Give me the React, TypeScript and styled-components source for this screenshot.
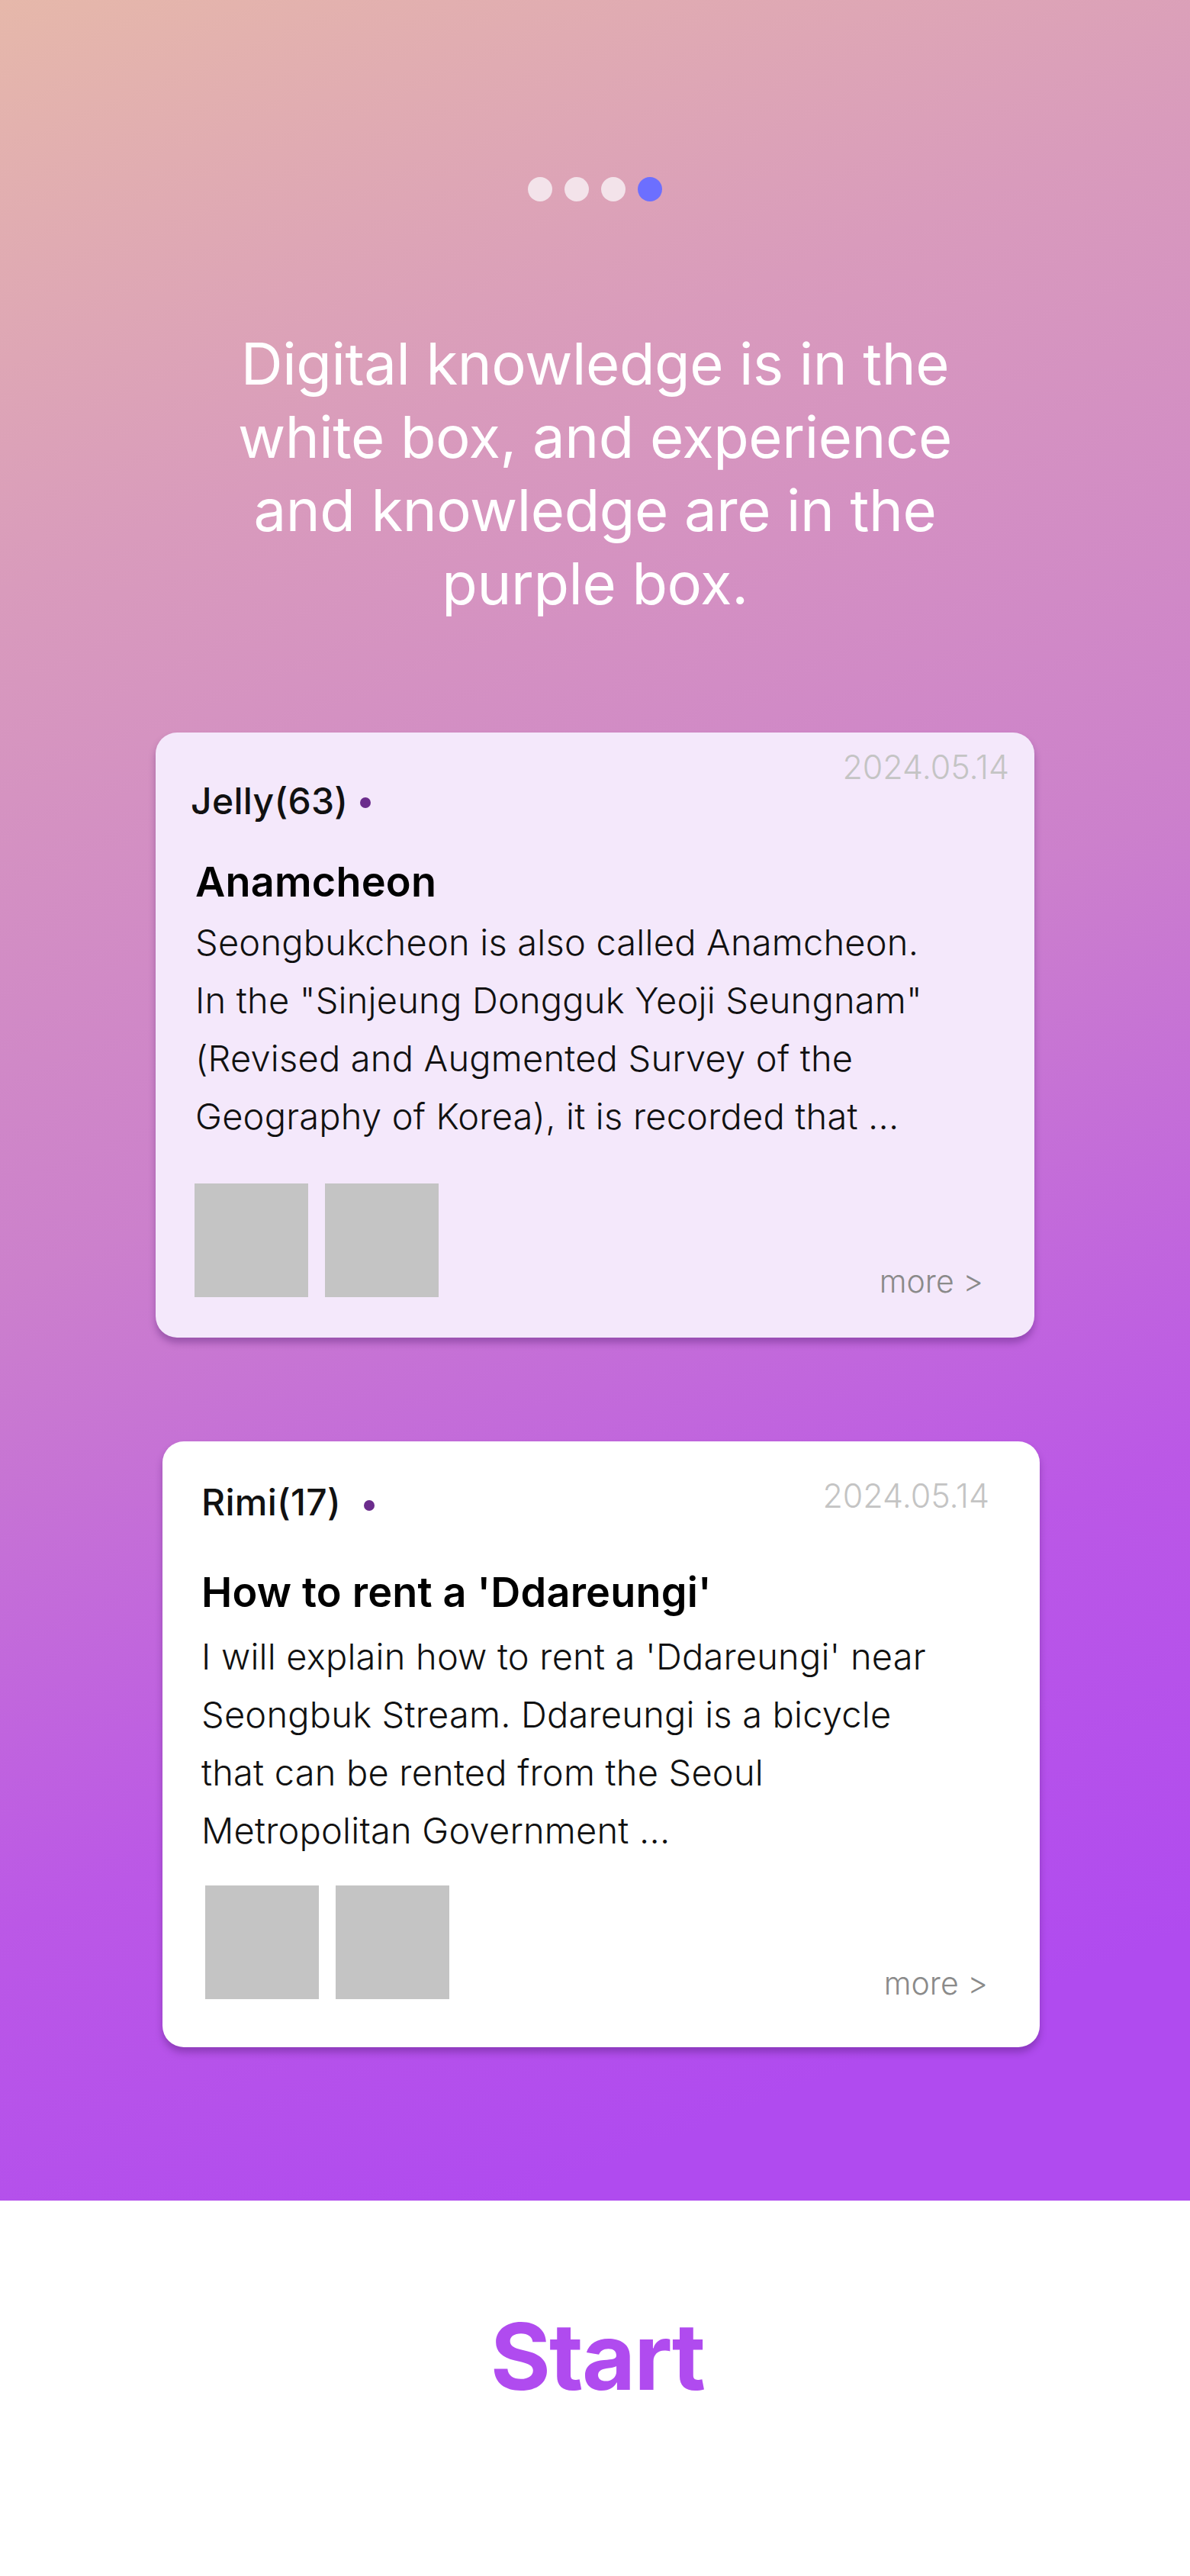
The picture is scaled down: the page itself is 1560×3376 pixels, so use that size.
import React from "react";
import styled, { createGlobalStyle } from "styled-components";

const Global = createGlobalStyle`
  html, body { margin: 0; padding: 0; background: #ffffff; }
  body { font-family: Inter, "Noto Sans", "Liberation Sans", sans-serif; }
  * { box-sizing: border-box; }
`;

const Page = styled.div`
  width: 1560px;
  display: flex;
  flex-direction: column;
`;

const Hero = styled.section`
  height: 2884px;
  padding: 232px 0 0 204px;
  display: flex;
  flex-direction: column;
  align-items: flex-start;
  background: linear-gradient(158deg, #e6b8aa 0%, #d99bbc 22%, #cc80cc 48%, #bb58e6 72%, #b04bef 90%);
`;

const Dots = styled.div`
  width: 1152px;
  display: flex;
  justify-content: center;
  gap: 16px;
`;

const Dot = styled.span<{ $active?: boolean }>`
  width: 32px;
  height: 32px;
  border-radius: 50%;
  background: ${(p) => (p.$active ? "#6c6fff" : "#f3e3ea")};
`;

const Heading = styled.h1`
  width: 1152px;
  margin: 164px 0 0 0;
  text-align: center;
  color: #ffffff;
  font-size: 76px;
  line-height: 96px;
  font-weight: 400;
  letter-spacing: -0.4px;
`;

const Card = styled.article<{ $bg: string; $mt: number; $ml: number; $w: number; $pb: number }>`
  width: ${(p) => p.$w}px;
  margin-top: ${(p) => p.$mt}px;
  margin-left: ${(p) => p.$ml}px;
  padding: 0 0 ${(p) => p.$pb}px 0;
  background: ${(p) => p.$bg};
  border-radius: 28px;
  box-shadow: 0 7px 10px rgba(70, 20, 100, 0.35);
  display: flex;
  flex-direction: column;
`;

const Header = styled.div`
  display: flex;
  justify-content: space-between;
  align-items: flex-start;
`;

const Author = styled.div<{ $top: number; $left: number; $dotGap: number }>`
  margin-top: ${(p) => p.$top}px;
  margin-left: ${(p) => p.$left}px;
  display: flex;
  align-items: center;
  gap: ${(p) => p.$dotGap}px;
  font-size: 48px;
  line-height: 56px;
  font-weight: 500;
  color: #111111;
  letter-spacing: 0.3px;
`;

const AuthorDot = styled.span<{ $drop: number }>`
  width: 14px;
  height: 14px;
  border-radius: 50%;
  background: #6b2c8c;
  margin-top: ${(p) => p.$drop * 2}px;
`;

const DateText = styled.span<{ $top: number; $right: number }>`
  margin-top: ${(p) => p.$top}px;
  margin-right: ${(p) => p.$right}px;
  font-size: 43px;
  line-height: 48px;
  font-weight: 300;
  color: #c4c4c4;
  letter-spacing: 0px;
`;

const Title = styled.h2<{ $top: number; $left: number }>`
  margin: ${(p) => p.$top}px 0 0 ${(p) => p.$left}px;
  font-size: 54px;
  line-height: 64px;
  font-weight: 600;
  color: #000000;
  letter-spacing: 0.2px;
`;

const Body = styled.p<{ $top: number; $left: number }>`
  margin: ${(p) => p.$top}px 0 0 ${(p) => p.$left}px;
  font-size: 47px;
  line-height: 76px;
  font-weight: 300;
  color: #111111;
  white-space: nowrap;
  letter-spacing: 0.2px;
`;

const Footer = styled.div<{ $top: number; $left: number; $right: number }>`
  margin: ${(p) => p.$top}px ${(p) => p.$right}px 0 ${(p) => p.$left}px;
  display: flex;
  justify-content: space-between;
  align-items: flex-end;
`;

const Thumbs = styled.div`
  display: flex;
  gap: 22px;
`;

const Thumb = styled.div`
  width: 149px;
  height: 149px;
  background: #c4c4c4;
`;

const More = styled.span`
  font-size: 41px;
  line-height: 42px;
  font-weight: 300;
  color: #8a8a8a;
`;

const StartSection = styled.section`
  height: 492px;
  padding-top: 144px;
  display: flex;
  justify-content: center;
  background: #ffffff;
`;

const StartButton = styled.button`
  border: none;
  background: transparent;
  padding: 0 0 0 6px;
  font-family: Inter, "Noto Sans", sans-serif;
  font-size: 121px;
  line-height: 121px;
  height: 121px;
  font-weight: 700;
  letter-spacing: -2px;
  color: #b04bef;
  cursor: pointer;
`;

type Post = {
  author: string;
  date: string;
  title: string;
  lines: string[];
  bg: string;
  card: { mt: number; ml: number; w: number; pb: number };
  authorTop: number;
  authorLeft: number;
  dotGap: number;
  dotDrop: number;
  dateTop: number;
  dateRight: number;
  titleTop: number;
  left: number;
  bodyTop: number;
  footerTop: number;
  thumbLeft: number;
  moreRight: number;
};

const posts: Post[] = [
  {
    author: "Jelly(63)",
    date: "2024.05.14",
    title: "Anamcheon",
    lines: [
      "Seongbukcheon is also called Anamcheon.",
      "In the \"Sinjeung Dongguk Yeoji Seungnam\"",
      "(Revised and Augmented Survey of the",
      "Geography of Korea), it is recorded that ...",
    ],
    bg: "#f4e8fb",
    card: { mt: 148, ml: 0, w: 1152, pb: 53 },
    authorTop: 62,
    authorLeft: 46,
    dotGap: 16,
    dotDrop: 2,
    dateTop: 21,
    dateRight: 33,
    titleTop: 46,
    left: 52,
    bodyTop: 9,
    footerTop: 50,
    thumbLeft: 51,
    moreRight: 67,
  },
  {
    author: "Rimi(17)",
    date: "2024.05.14",
    title: "How to rent a 'Ddareungi'",
    lines: [
      "I will explain how to rent a 'Ddareungi' near",
      "Seongbuk Stream. Ddareungi is a bicycle",
      "that can be rented from the Seoul",
      "Metropolitan Government ...",
    ],
    bg: "#ffffff",
    card: { mt: 136, ml: 9, w: 1150, pb: 63 },
    authorTop: 52,
    authorLeft: 51,
    dotGap: 30,
    dotDrop: 4,
    dateTop: 47,
    dateRight: 66,
    titleTop: 58,
    left: 51,
    bodyTop: 14,
    footerTop: 34,
    thumbLeft: 56,
    moreRight: 68,
  },
];

function PostCard({ p }: { p: Post }) {
  return (
    <Card $bg={p.bg} $mt={p.card.mt} $ml={p.card.ml} $w={p.card.w} $pb={p.card.pb}>
      <Header>
        <Author $top={p.authorTop} $left={p.authorLeft} $dotGap={p.dotGap}>
          {p.author}
          <AuthorDot $drop={p.dotDrop} />
        </Author>
        <DateText $top={p.dateTop} $right={p.dateRight}>
          {p.date}
        </DateText>
      </Header>
      <Title $top={p.titleTop} $left={p.left}>
        {p.title}
      </Title>
      <Body $top={p.bodyTop} $left={p.left}>
        {p.lines.map((l, i) => (
          <React.Fragment key={i}>
            {l}
            {i < p.lines.length - 1 && <br />}
          </React.Fragment>
        ))}
      </Body>
      <Footer $top={p.footerTop} $left={p.thumbLeft} $right={p.moreRight}>
        <Thumbs>
          <Thumb />
          <Thumb />
        </Thumbs>
        <More>more &gt;</More>
      </Footer>
    </Card>
  );
}

export default function App() {
  return (
    <>
      <Global />
      <Page>
        <Hero>
          <Dots>
            <Dot />
            <Dot />
            <Dot />
            <Dot $active />
          </Dots>
          <Heading>
            Digital knowledge is in the
            <br />
            white box, and experience
            <br />
            and knowledge are in the
            <br />
            purple box.
          </Heading>
          {posts.map((p, i) => (
            <PostCard key={i} p={p} />
          ))}
        </Hero>
        <StartSection>
          <StartButton>Start</StartButton>
        </StartSection>
      </Page>
    </>
  );
}
